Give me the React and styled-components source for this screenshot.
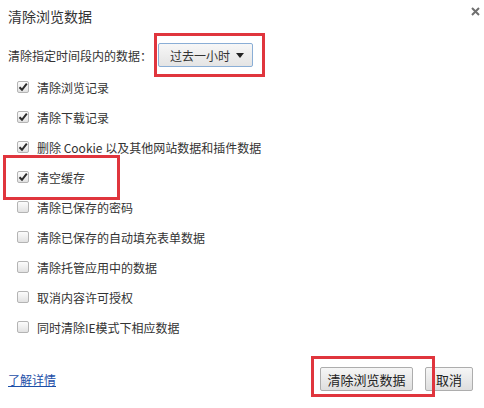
import React from 'react'
import styled, { createGlobalStyle } from 'styled-components'

const GlobalStyle = createGlobalStyle`
  html, body {
    margin: 0;
    padding: 0;
    background: #fff;
  }
  body {
    font-family: "Noto Sans CJK SC", "Noto Sans", sans-serif;
    color: #333;
  }
`

const Dialog = styled.div`
  position: relative;
  width: 484px;
  height: 408px;
  box-sizing: border-box;
  padding: 6px 11px 0 8px;
  display: flex;
  flex-direction: column;
  background: #fff;
`

const Title = styled.h1`
  margin: 0;
  font-size: 14px;
  font-weight: normal;
  line-height: 20px;
  color: #333;
`

const Close = styled.div`
  position: absolute;
  top: 7px;
  right: 4px;
  width: 9px;
  height: 9px;
  display: flex;
`

const RangeRow = styled.div`
  display: flex;
  align-items: center;
  margin-top: 17px;
  font-size: 12px;
  height: 24px;
`

const Marked = styled.span`
  position: relative;
  display: inline-flex;
  align-items: center;
`

const Highlight = styled.span`
  position: absolute;
  top: ${p => p.$t}px;
  left: ${p => p.$l}px;
  right: ${p => p.$r}px;
  bottom: ${p => p.$b}px;
  border: 3px solid #e0353d;
  pointer-events: none;
`

const Select = styled.div`
  width: 95px;
  height: 24px;
  box-sizing: border-box;
  margin-left: 6px;
  border: 1px solid #8aaed6;
  border-radius: 2px;
  background: linear-gradient(#f7f7f7, #e4e4e4);
  display: flex;
  align-items: center;
  justify-content: space-between;
  padding: 0 8px 0 11px;
  font-size: 12px;
  color: #333;
`

const Arrow = styled.span`
  width: 0;
  height: 0;
  border-left: 4px solid transparent;
  border-right: 4px solid transparent;
  border-top: 5px solid #222;
`

const List = styled.div`
  margin-top: 5px;
  padding-left: 9px;
  display: flex;
  flex-direction: column;
`

const Row = styled.label`
  height: 30px;
  display: flex;
  align-items: center;
  font-size: 12px;
  color: #333;
`

const Box = styled.span`
  width: 12px;
  height: 12px;
  box-sizing: border-box;
  border: 1px solid #b4b4b4;
  border-radius: 2px;
  background: linear-gradient(#fcfcfc, #e2e2e2);
  margin-right: 8px;
  display: flex;
  align-items: center;
  justify-content: center;
  flex-shrink: 0;
`

const Footer = styled.div`
  margin-top: 25px;
  display: flex;
  align-items: center;
`

const Link = styled.a`
  font-size: 12px;
  color: #1d4fa8;
  text-decoration: underline;
  cursor: pointer;
`

const Spacer = styled.div`
  flex: 1;
`

const Button = styled.button`
  height: 24px;
  width: ${p => p.$w}px;
  box-sizing: border-box;
  padding: 0;
  border: 1px solid #adadad;
  border-radius: 2px;
  background: linear-gradient(#f6f6f6, #dedede);
  font-family: "Noto Sans CJK SC", "Noto Sans", sans-serif;
  font-size: 13px;
  color: #222;
  margin-left: ${p => p.$ml || 0}px;
`

const items = [
  { text: '清除浏览记录', checked: true },
  { text: '清除下载记录', checked: true },
  { text: '删除 Cookie 以及其他网站数据和插件数据', checked: true },
  { text: '清空缓存', checked: true, mark: true },
  { text: '清除已保存的密码', checked: false },
  { text: '清除已保存的自动填充表单数据', checked: false },
  { text: '清除托管应用中的数据', checked: false },
  { text: '取消内容许可授权', checked: false },
  { text: '同时清除IE模式下相应数据', checked: false },
]

const Check = () => (
  <svg width="10" height="10" viewBox="0 0 10 10">
    <path d="M1.5 5.2 L4 7.8 L8.8 1.6" fill="none" stroke="#2b2b2b" strokeWidth="2" />
  </svg>
)

const Item = ({ text, checked }) => (
  <>
    <Box>{checked && <Check />}</Box>
    <span>{text}</span>
  </>
)

export default function App() {
  return (
    <>
      <GlobalStyle />
      <Dialog>
        <Title>清除浏览数据</Title>
        <Close>
          <svg width="9" height="9" viewBox="0 0 9 9">
            <path d="M1 1 L8 8 M8 1 L1 8" stroke="#6f6f6f" strokeWidth="2" />
          </svg>
        </Close>
        <RangeRow>
          <span>清除指定时间段内的数据：</span>
          <Marked>
            <Select>
              <span>过去一小时</span>
              <Arrow />
            </Select>
            <Highlight $t={-10} $l={2} $r={-12} $b={-10} />
          </Marked>
        </RangeRow>
        <List>
          {items.map(it => (
            <Row key={it.text}>
              {it.mark ? (
                <Marked>
                  <Item {...it} />
                  <Highlight $t={-14} $l={-14} $r={-35} $b={-14} />
                </Marked>
              ) : (
                <Item {...it} />
              )}
            </Row>
          ))}
        </List>
        <Footer>
          <Link>了解详情</Link>
          <Spacer />
          <Marked>
            <Button $w={93}>清除浏览数据</Button>
            <Highlight $t={-11} $l={-9} $r={-22} $b={-6} />
          </Marked>
          <Button $w={48} $ml={12}>取消</Button>
        </Footer>
      </Dialog>
    </>
  )
}
